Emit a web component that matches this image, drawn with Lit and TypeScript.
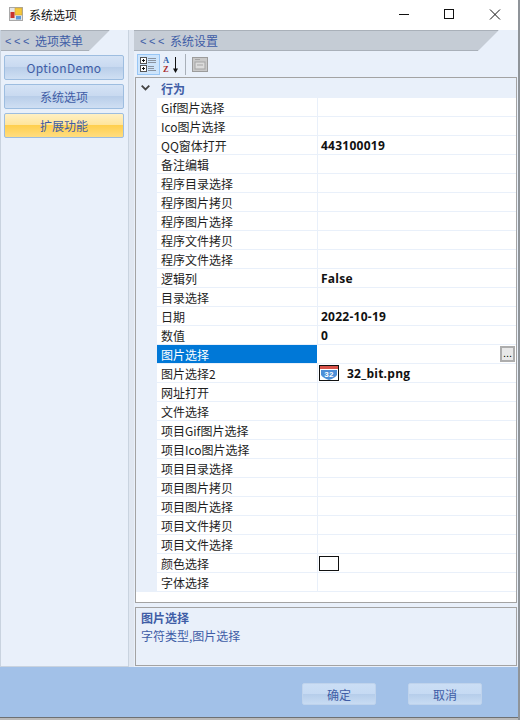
import { LitElement, html, css } from "lit";
import { customElement } from "lit/decorators.js";

const rows: [string, string?][] = [
  ["Gif图片选择"], ["Ico图片选择"], ["QQ窗体打开", "443100019"], ["备注编辑"], ["程序目录选择"],
  ["程序图片拷贝"], ["程序图片选择"], ["程序文件拷贝"], ["程序文件选择"], ["逻辑列", "False"],
  ["目录选择"], ["日期", "2022-10-19"], ["数值", "0"], ["图片选择"], ["图片选择2"], ["网址打开"],
  ["文件选择"], ["项目Gif图片选择"], ["项目Ico图片选择"], ["项目目录选择"], ["项目图片拷贝"],
  ["项目图片选择"], ["项目文件拷贝"], ["项目文件选择"], ["颜色选择"], ["字体选择"],
];

@customElement("app-root")
export class AppRoot extends LitElement {
  static styles = css`
    :host { display: block; width: 520px; height: 720px; background: #fff; overflow: hidden;
      font-family: "Noto Sans CJK SC", sans-serif; font-size: 12px; color: #1e1e1e; }
    .window { width: 520px; height: 720px; display: flex; flex-direction: column; box-sizing: border-box;
      border-right: 2px solid #8f9499; background: #fff; }
    .title { height: 30px; flex: none; box-sizing: border-box; display: flex; align-items: center; padding: 0 0 2px 9px; }
    .title .name { margin-left: 6px; font-size: 12px; color: #111; }
    .ctl { margin-left: auto; display: flex; align-items: center; }
    .ctl svg { display: block; }
    .body { flex: none; height: 637px; display: flex; background: #e0e7f1; }
    .left { width: 129px; box-sizing: border-box; border-left: 1px solid #c9d3df; border-right: 1px solid #c9d3df;
      background: #e9f0fa; border-bottom: 1px solid #c9d3df; }
    .right { margin-left: 5px; width: 384px; display: flex; flex-direction: column; background: #e9f0fa; }
    .head { height: 21px; box-sizing: border-box; position: relative; display: flex; align-items: center;
      color: #3f5da6; font-size: 12px; padding-left: 6px; }
    .left .head { padding-left: 4px; }
    .head span { position: relative; }
    .head .arrows { letter-spacing: 2.6px; width: 30px; font-family: "Liberation Sans", sans-serif; font-size: 11px; }
    .head svg { position: absolute; left: 0; top: 0; }
    .menu { padding: 4px 4px 0 3px; display: flex; flex-direction: column; gap: 4px; }
    .btn { height: 25px; box-sizing: border-box; border: 1px solid #9dbde0; border-radius: 2px;
      display: flex; align-items: center; justify-content: center; color: #3f5da6; font-size: 12px;
      background: linear-gradient(#d5e3f5 0%, #c8d9f0 49%, #b9cee9 50%, #cfdff3 100%); }
    .btn.latin { letter-spacing: 0.3px; }
    .btn.on { background: linear-gradient(#fff0c4 0%, #ffe59c 46%, #ffcf4e 50%, #ffdd80 100%); }
    .tools { height: 26px; box-sizing: border-box; display: flex; align-items: center; padding-left: 3px; flex: none; }
    .tool { width: 23px; height: 21px; box-sizing: border-box; display: flex; align-items: center; justify-content: center; }
    .tool.on { background: #cde4fb; border: 1px solid #98c6f5; }
    .sep { width: 1px; height: 21px; background: #a9b0b9; margin: 0 3px 0 2px; }
    .grid { flex: none; height: 526px; box-sizing: border-box; margin: 0 1px; border: 1px solid #a3a3a3; background: #fff; display: flex; flex-direction: column; }
    .cat { height: 20px; flex: none; background: #e9f0fa; display: flex; align-items: center; color: #3f5da6; font-weight: 700; font-size: 12px; }
    .cat .chev { width: 25px; box-sizing: border-box; padding-left: 5px; display: flex; }
    .row { height: 19px; flex: none; box-sizing: border-box; display: flex; border-bottom: 1px solid #e9f0fa; }
    .gut { width: 21px; flex: none; background: #e9f0fa; margin-bottom: -1px; }
    .lbl { width: 160px; flex: none; box-sizing: border-box; padding-left: 4px;
      line-height: 19px; white-space: nowrap; overflow: hidden; }
    .val { flex: 1; min-width: 0; padding-left: 3px; border-left: 1px solid #e9f0fa; line-height: 18px; font-weight: 700; font-family: "Open Sans", "DejaVu Sans", sans-serif; font-size: 12px; letter-spacing: 0.25px; color: #111;
      display: flex; align-items: center; position: relative; white-space: nowrap; }
    .txt { display: block; padding-top: 2px; }
    .row.sel .lbl { background: #0078d7; color: #fff; }
    .row.sel .val { border-left-color: #fff; }
    .ell { position: absolute; right: 1px; top: 1px; width: 15px; height: 16px; box-sizing: border-box;
      border: 2px solid #adadad; background: #e8e8e8; color: #000; font-size: 11px; line-height: 11px; letter-spacing: 0; text-align: center; font-weight: 400; font-family: "Liberation Sans", sans-serif; }
    .swatch { width: 20px; height: 15px; box-sizing: border-box; border: 1px solid #111; background: #fff; margin-left: -2px; }
    .pic { margin-left: -2px; margin-right: 8px; display: block; }
    .help { flex: none; height: 59px; box-sizing: border-box; margin: 4px 1px 0; border: 1px solid #a3a3a3; background: #e9f0fa;
      color: #3f5da6; padding: 1px 5px; line-height: 18px; }
    .help b { display: block; }
    .foot { flex: none; height: 50px; background: #a2c1e8; display: flex; justify-content: flex-end; align-items: flex-start; padding: 16px 36px 0 0; gap: 32px; box-sizing: border-box; }
    .fbtn { width: 74px; height: 22px; box-sizing: border-box; border: 1px solid #bfd3ec; border-radius: 2px; color: #3f5da6;
      display: flex; align-items: center; justify-content: center;
      background: linear-gradient(#cbdef5 0%, #c6daf3 49%, #b5cdea 50%, #c8dcf3 100%); }
    .edge { height: 3px; flex: none; border-top: 1px solid #6d7073; background: #b9b9b9; box-sizing: border-box; }
  `;

  private row(r: [string, string?]) {
    const [name, value] = r;
    let v: unknown = value ? html`<span class="txt">${value}</span>` : "";
    if (name === "图片选择") v = html`<div class="ell">...</div>`;
    if (name === "图片选择2") v = html`<svg class="pic" width="20" height="16" viewBox="0 0 20 16">
      <rect x=".5" y=".5" width="19" height="15" fill="#fff" stroke="#111"/>
      <rect x="1" y="1" width="18" height="3" fill="#d9534a"/>
      <path d="M2 5h16v5q-2 3-8 5q-6-2-8-5z" fill="#4c8fd8"/>
      <text x="10" y="12" font-size="8" font-weight="700" fill="#fff" text-anchor="middle" font-family="Liberation Sans">32</text>
    </svg><span class="txt">32_bit.png</span>`;
    if (name === "颜色选择") v = html`<div class="swatch"></div>`;
    return html`<div class="row ${name === "图片选择" ? "sel" : ""}">
      <div class="gut"></div><div class="lbl">${name}</div><div class="val">${v}</div></div>`;
  }

  render() {
    return html`<div class="window">
      <div class="title">
        <svg width="14" height="14" viewBox="0 0 14 14">
          <rect x=".5" y=".5" width="13" height="13" fill="#e6e6e6" stroke="#a8a8a8"/>
          <rect x="6" y="1" width="7" height="7" fill="#f5c83a" stroke="#c9a13c" stroke-width=".6"/>
          <rect x="1.5" y="5" width="4" height="6" fill="#c8332c"/>
          <rect x="7" y="9" width="5" height="3.5" fill="#5d9ad8"/>
        </svg>
        <span class="name">系统选项</span>
        <div class="ctl">
          <svg width="134" height="28" viewBox="0 0 134 28" fill="none" stroke="#111">
            <path d="M15 14.5h10"/>
            <rect x="60.5" y="9.5" width="9" height="9"/>
            <path d="M106 9.5l10 10M116 9.5l-10 10"/>
          </svg>
        </div>
      </div>
      <div class="body">
        <div class="left">
          <div class="head">
            <svg width="110" height="21"><path d="M0 0H109L88 21H0Z" fill="#c5ccd5"/><path d="M0 .5H108M0 20.5H88" stroke="#a9b0b9"/></svg>
            <span class="arrows">&lt;&lt;&lt;</span><span>选项菜单</span>
          </div>
          <div class="menu">
            <div class="btn latin">OptionDemo</div>
            <div class="btn">系统选项</div>
            <div class="btn on">扩展功能</div>
          </div>
        </div>
        <div class="right">
          <div class="head">
            <svg width="365" height="21"><path d="M0 0H365L344 21H0Z" fill="#c5ccd5"/><path d="M0 .5H364M0 20.5H344" stroke="#a9b0b9"/></svg>
            <span class="arrows">&lt;&lt;&lt;</span><span>系统设置</span>
          </div>
          <div class="tools">
            <div class="tool on">
              <svg width="17" height="17" viewBox="0 0 17 17">
                <rect x=".5" y="1.5" width="6" height="6" fill="#fff" stroke="#555"/><path d="M2 4.5h3M3.5 3v3" stroke="#111"/>
                <rect x=".5" y="9.5" width="6" height="6" fill="#fff" stroke="#555"/><path d="M2 12.5h3M3.5 11v3" stroke="#111"/>
                <path d="M8 2.5h8M8 4.5h8M8 6.5h8M8 10.5h6M8 12.5h6M8 14.5h8" stroke="#8a93a0"/>
              </svg>
            </div>
            <div class="tool">
              <svg width="18" height="19" viewBox="0 0 18 19">
                <text x="0" y="8" font-size="8.5" font-weight="700" fill="#2f5fa8" font-family="Liberation Serif">A</text>
                <text x="0" y="17" font-size="8.5" font-weight="700" fill="#a82a2a" font-family="Liberation Serif">Z</text>
                <path d="M12.5 2v13" stroke="#111"/><path d="M10 13.5h5L12.5 18z" fill="#111"/>
              </svg>
            </div>
            <div class="sep"></div>
            <div class="tool">
              <svg width="17" height="17" viewBox="0 0 17 17">
                <rect x=".5" y="1.5" width="15" height="14" fill="#c9c9c9" stroke="#9c9c9c"/>
                <rect x="3" y="6" width="10" height="7" fill="#dcdcdc" stroke="#a5a5a5"/>
                <path d="M3 3.5h5M5 9h6" stroke="#a5a5a5"/>
              </svg>
            </div>
          </div>
          <div class="grid">
            <div class="cat">
              <div class="chev"><svg width="9" height="6" viewBox="0 0 9 6"><path d="M.7 .7l3.8 3.8L8.3 .7" fill="none" stroke="#444" stroke-width="1.8"/></svg></div>
              <span>行为</span>
            </div>
            ${rows.map((r) => this.row(r))}
          </div>
          <div class="help"><b>图片选择</b>字符类型,图片选择</div>
        </div>
      </div>
      <div class="foot"><div class="fbtn">确定</div><div class="fbtn">取消</div></div>
      <div class="edge"></div>
    </div>`;
  }
}
